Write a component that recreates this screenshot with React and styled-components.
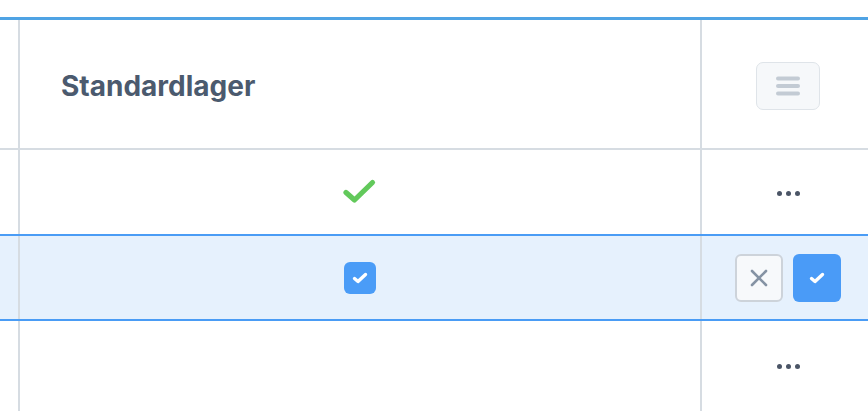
import React from 'react';
import styled, { createGlobalStyle } from 'styled-components';

const GlobalStyle = createGlobalStyle`
  body {
    margin: 0;
    background: #ffffff;
    font-family: 'Inter', 'Noto Sans', sans-serif;
    overflow: hidden;
  }
`;

const Table = styled.div`
  margin-top: 17px;
  border-top: 3px solid #4fa3e4;
  width: 874px;
`;

const Row = styled.div`
  display: flex;
  height: ${(props) => props.$height}px;
  background: ${(props) => (props.$active ? '#e6f1fd' : '#ffffff')};
  border-top: ${(props) =>
    props.$noTop ? 'none' : `2px solid ${props.$active ? '#4a9cf5' : '#d6dce2'}`};
  border-bottom: ${(props) => (props.$active ? '2px solid #4a9cf5' : 'none')};
`;

const EdgeCell = styled.div`
  width: 18px;
  border-right: 2px solid #d6dce2;
`;

const MainCell = styled.div`
  width: 682px;
  display: flex;
  align-items: center;
  justify-content: ${(props) => (props.$left ? 'flex-start' : 'center')};
  padding-left: ${(props) => (props.$left ? '41px' : '0')};
  padding-top: ${(props) => (props.$left ? '3px' : '0')};
  box-sizing: border-box;
  border-right: 2px solid #d6dce2;
`;

const ActionCell = styled.div`
  width: 172px;
  display: flex;
  align-items: center;
  justify-content: center;
  gap: 10px;
`;

const HeaderTitle = styled.span`
  font-size: 28px;
  font-weight: 700;
  color: #4b5a6e;
`;

const MenuButton = styled.button`
  width: 64px;
  height: 48px;
  margin-top: 4px;
  border: 1.5px solid #dfe4e9;
  border-radius: 7px;
  background: #f6f8fa;
  display: flex;
  align-items: center;
  justify-content: center;
  padding: 0;
`;

const Checkbox = styled.div`
  width: 32px;
  height: 32px;
  border-radius: 6px;
  background: #4a9cf7;
  display: flex;
  align-items: center;
  justify-content: center;
`;

const IconButton = styled.button`
  width: 48px;
  height: 48px;
  box-sizing: border-box;
  border-radius: 6px;
  padding: 0;
  display: flex;
  align-items: center;
  justify-content: center;
  border: ${(props) => (props.$primary ? 'none' : '2px solid #cdd3da')};
  background: ${(props) => (props.$primary ? '#4a9bf7' : '#f7f9fb')};
`;

const Dots = styled.div`
  display: flex;
  gap: 4px;
  padding-top: ${(props) => props.$offset || 0}px;

  span {
    width: 5px;
    height: 5px;
    border-radius: 50%;
    background: #4b5566;
  }
`;

const SmallCheck = ({ color = '#fff' }) => (
  <svg width="16" height="12" viewBox="0 0 16 12">
    <path
      d="M2.5 6.5 L6 9.5 L13.5 2.5"
      fill="none"
      stroke={color}
      strokeWidth="3.4"
      strokeLinecap="round"
      strokeLinejoin="round"
    />
  </svg>
);

const MoreDots = ({ offset }) => (
  <Dots $offset={offset}>
    <span />
    <span />
    <span />
  </Dots>
);

const App = () => {
  return (
    <>
      <GlobalStyle />
      <Table>
        <Row $height={128} $noTop>
          <EdgeCell />
          <MainCell $left>
            <HeaderTitle>Standardlager</HeaderTitle>
          </MainCell>
          <ActionCell>
            <MenuButton>
              <svg width="26" height="22" viewBox="0 0 26 22">
                <g stroke="#c3cbd4" strokeWidth="4" strokeLinecap="round">
                  <line x1="3" y1="3.5" x2="23" y2="3.5" />
                  <line x1="3" y1="11" x2="23" y2="11" />
                  <line x1="3" y1="18.5" x2="23" y2="18.5" />
                </g>
              </svg>
            </MenuButton>
          </ActionCell>
        </Row>
        <Row $height={84}>
          <EdgeCell />
          <MainCell>
            <svg width="36" height="28" viewBox="0 0 36 28">
              <path
                d="M4 14.5 L12.5 22 L30.5 4.5"
                fill="none"
                stroke="#62c95b"
                strokeWidth="5.2"
                strokeLinecap="round"
                strokeLinejoin="round"
              />
            </svg>
          </MainCell>
          <ActionCell>
            <MoreDots offset={2} />
          </ActionCell>
        </Row>
        <Row $height={83} $active>
          <EdgeCell />
          <MainCell>
            <Checkbox>
              <SmallCheck />
            </Checkbox>
          </MainCell>
          <ActionCell>
            <IconButton>
              <svg width="18" height="18" viewBox="0 0 18 18">
                <g stroke="#8593a4" strokeWidth="2.6" strokeLinecap="round">
                  <line x1="2" y1="2" x2="16" y2="16" />
                  <line x1="16" y1="2" x2="2" y2="16" />
                </g>
              </svg>
            </IconButton>
            <IconButton $primary>
              <SmallCheck />
            </IconButton>
          </ActionCell>
        </Row>
        <Row $height={90} $noTop>
          <EdgeCell />
          <MainCell />
          <ActionCell>
            <MoreDots offset={0} />
          </ActionCell>
        </Row>
      </Table>
    </>
  );
};

export default App;
